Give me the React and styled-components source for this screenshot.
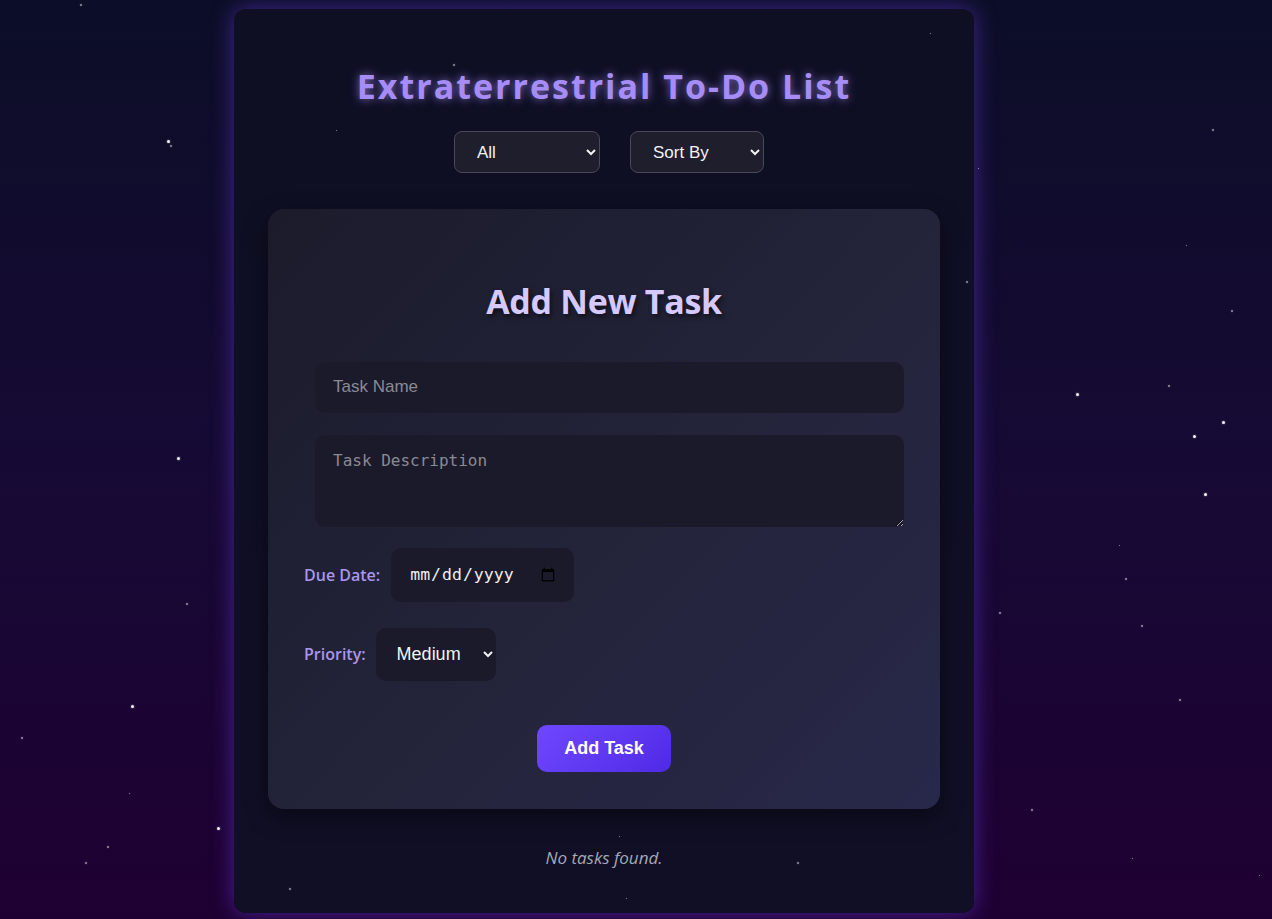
import React, { useState } from 'react'
import styled, { createGlobalStyle } from 'styled-components'

const GlobalStyle = createGlobalStyle`
  html, body {
    margin: 0;
    padding: 0;
    height: 100%;
  }
  body {
    font-family: 'Noto Sans', 'Open Sans', sans-serif;
    background: linear-gradient(to bottom, #0c0e28 0%, #160a34 50%, #1f0033 100%);
    min-height: 919px;
    overflow: hidden;
  }
`

const STARS = [
  [80, 4, 2], [167, 140, 3], [170, 145, 2], [177, 457, 3], [186, 603, 2], [131, 705, 3],
  [21, 737, 2], [217, 827, 3], [107, 846, 2], [85, 862, 2], [129, 793, 1],
  [1212, 129, 2], [1186, 245, 1], [1231, 310, 2], [1168, 385, 2], [1076, 393, 3],
  [1193, 435, 3], [1222, 421, 3], [1204, 493, 3], [1119, 545, 1], [1125, 578, 2],
  [999, 612, 2], [1141, 625, 2], [1179, 699, 2], [1031, 809, 2], [1132, 858, 1],
  [1259, 875, 1], [453, 64, 2], [336, 130, 1], [966, 281, 2], [930, 33, 1],
  [978, 168, 1], [797, 862, 2], [619, 836, 1], [626, 898, 1], [289, 888, 2],
]

const Page = styled.div`
  position: relative;
  min-height: 919px;
  display: flex;
  justify-content: flex-start;
  padding: 9px 0 0 234px;
  box-sizing: border-box;
`

const Star = styled.span`
  position: absolute;
  border-radius: 50%;
  background: #fff;
  opacity: ${p => (p.$size > 2 ? 0.95 : 0.55)};
  box-shadow: 0 0 2px rgba(255, 255, 255, 0.6);
  pointer-events: none;
  z-index: 2;
`

const Container = styled.div`
  position: relative;
  z-index: 1;
  width: 740px;
  height: 904px;
  box-sizing: border-box;
  background: rgba(16, 16, 36, 0.96);
  border-radius: 12px;
  box-shadow: 0 0 22px rgba(106, 60, 230, 0.55);
  display: flex;
  flex-direction: column;
  align-items: center;
  padding: 59px 34px 0;
`

const Title = styled.h1`
  margin: 0;
  font-family: 'Open Sans', 'Noto Sans', sans-serif;
  font-weight: 700;
  font-size: 34px;
  letter-spacing: 2px;
  line-height: 1.1;
  color: #a68cf7;
  text-shadow: 0 0 8px rgba(167, 139, 250, 0.75);
`

const Filters = styled.div`
  display: flex;
  gap: 30px;
  margin: 26px 0 0 10px;
`

const FilterSelect = styled.select`
  width: ${p => p.$w}px;
  height: 42px;
  box-sizing: border-box;
  padding: 0 14px 0 18px;
  font-family: 'Liberation Sans', Arial, sans-serif;
  font-size: 17px;
  color: #f2f2f2;
  background: #1e1e2c;
  border: 1px solid #48485a;
  border-radius: 8px;
  color-scheme: dark;
`

const Card = styled.div`
  width: 672px;
  height: 600px;
  box-sizing: border-box;
  margin-top: 36px;
  border-radius: 16px;
  background: linear-gradient(135deg, #1b1b2c 0%, #232339 50%, #28284a 100%);
  box-shadow: 0 8px 24px rgba(0, 0, 0, 0.45);
  padding: 74px 36px 30px;
  display: flex;
  flex-direction: column;
`

const CardTitle = styled.h2`
  margin: 0 0 41px;
  text-align: center;
  font-family: 'Open Sans', 'Noto Sans', sans-serif;
  font-weight: 700;
  font-size: 34px;
  line-height: 1.1;
  letter-spacing: -0.3px;
  color: #d6c9ff;
  text-shadow: 2px 3px 5px rgba(0, 0, 0, 0.55);
`

const TextInput = styled.input`
  align-self: flex-end;
  width: 589px;
  height: 51px;
  box-sizing: border-box;
  padding: 0 18px;
  font-family: 'Liberation Sans', Arial, sans-serif;
  font-size: 17px;
  color: #eee;
  background: #1a1a2b;
  border: none;
  border-radius: 10px;
  outline: none;
  &::placeholder {
    color: #8a8a92;
  }
`

const TextArea = styled.textarea`
  align-self: flex-end;
  width: 589px;
  height: 92px;
  margin-top: 22px;
  box-sizing: border-box;
  padding: 16px 18px;
  font-family: 'DejaVu Sans Mono', 'Liberation Mono', monospace;
  font-size: 16px;
  color: #eee;
  background: #1a1a2b;
  border: none;
  border-radius: 10px;
  outline: none;
  resize: vertical;
  &::placeholder {
    color: #8a8a92;
  }
`

const FieldRow = styled.div`
  display: flex;
  align-items: center;
  gap: ${p => p.$gap}px;
  margin-top: ${p => p.$mt}px;
`

const Label = styled.label`
  font-family: 'Open Sans', 'Noto Sans', sans-serif;
  font-weight: 600;
  font-size: 16px;
  color: #a996ec;
`

const DateInput = styled.input`
  width: 183px;
  height: 54px;
  box-sizing: border-box;
  padding: 0 16px 0 18px;
  font-family: 'DejaVu Sans Mono', 'Liberation Mono', monospace;
  font-size: 16.5px;
  color: #eee;
  background: #1a1a2b;
  border: none;
  border-radius: 10px;
  outline: none;
`

const PrioritySelect = styled.select`
  width: 120px;
  height: 53px;
  box-sizing: border-box;
  padding: 0 6px 0 17px;
  font-family: 'Liberation Sans', Arial, sans-serif;
  font-size: 18px;
  color: #f2f2f2;
  background: #1a1a2b;
  border: none;
  border-radius: 10px;
  color-scheme: dark;
  outline: none;
`

const SubmitButton = styled.button`
  align-self: center;
  margin-top: 44px;
  width: 134px;
  height: 47px;
  border: none;
  border-radius: 10px;
  background: linear-gradient(135deg, #6f47ff 0%, #4f2ae6 100%);
  color: #fff;
  font-family: 'Liberation Sans', Arial, sans-serif;
  font-weight: 700;
  font-size: 18px;
  cursor: pointer;
`

const Empty = styled.p`
  margin: 37px 0 0;
  font-family: 'Open Sans', 'Noto Sans', sans-serif;
  font-style: italic;
  font-size: 17px;
  color: #a8a8b6;
`

export default function App() {
  const [filter, setFilter] = useState('all')
  const [sort, setSort] = useState('')
  const [priority, setPriority] = useState('medium')

  return (
    <>
      <GlobalStyle />
      <Page>
        {STARS.map(([x, y, s], i) => (
          <Star key={i} $size={s} style={{ left: x, top: y, width: s, height: s }} />
        ))}
        <Container>
          <Title>Extraterrestrial To-Do List</Title>
          <Filters>
            <FilterSelect $w={146} value={filter} onChange={e => setFilter(e.target.value)}>
              <option value="all">All</option>
              <option value="active">Active</option>
              <option value="completed">Completed</option>
            </FilterSelect>
            <FilterSelect $w={134} value={sort} onChange={e => setSort(e.target.value)}>
              <option value="">Sort By</option>
              <option value="date">Due Date</option>
              <option value="priority">Priority</option>
            </FilterSelect>
          </Filters>

          <Card>
            <CardTitle>Add New Task</CardTitle>
            <TextInput placeholder="Task Name" />
            <TextArea placeholder="Task Description" />
            <FieldRow $mt={21} $gap={11}>
              <Label>Due Date:</Label>
              <DateInput type="date" />
            </FieldRow>
            <FieldRow $mt={26} $gap={10}>
              <Label>Priority:</Label>
              <PrioritySelect value={priority} onChange={e => setPriority(e.target.value)}>
                <option value="low">Low</option>
                <option value="medium">Medium</option>
                <option value="high">High</option>
              </PrioritySelect>
            </FieldRow>
            <SubmitButton>Add Task</SubmitButton>
          </Card>

          <Empty>No tasks found.</Empty>
        </Container>
      </Page>
    </>
  )
}
